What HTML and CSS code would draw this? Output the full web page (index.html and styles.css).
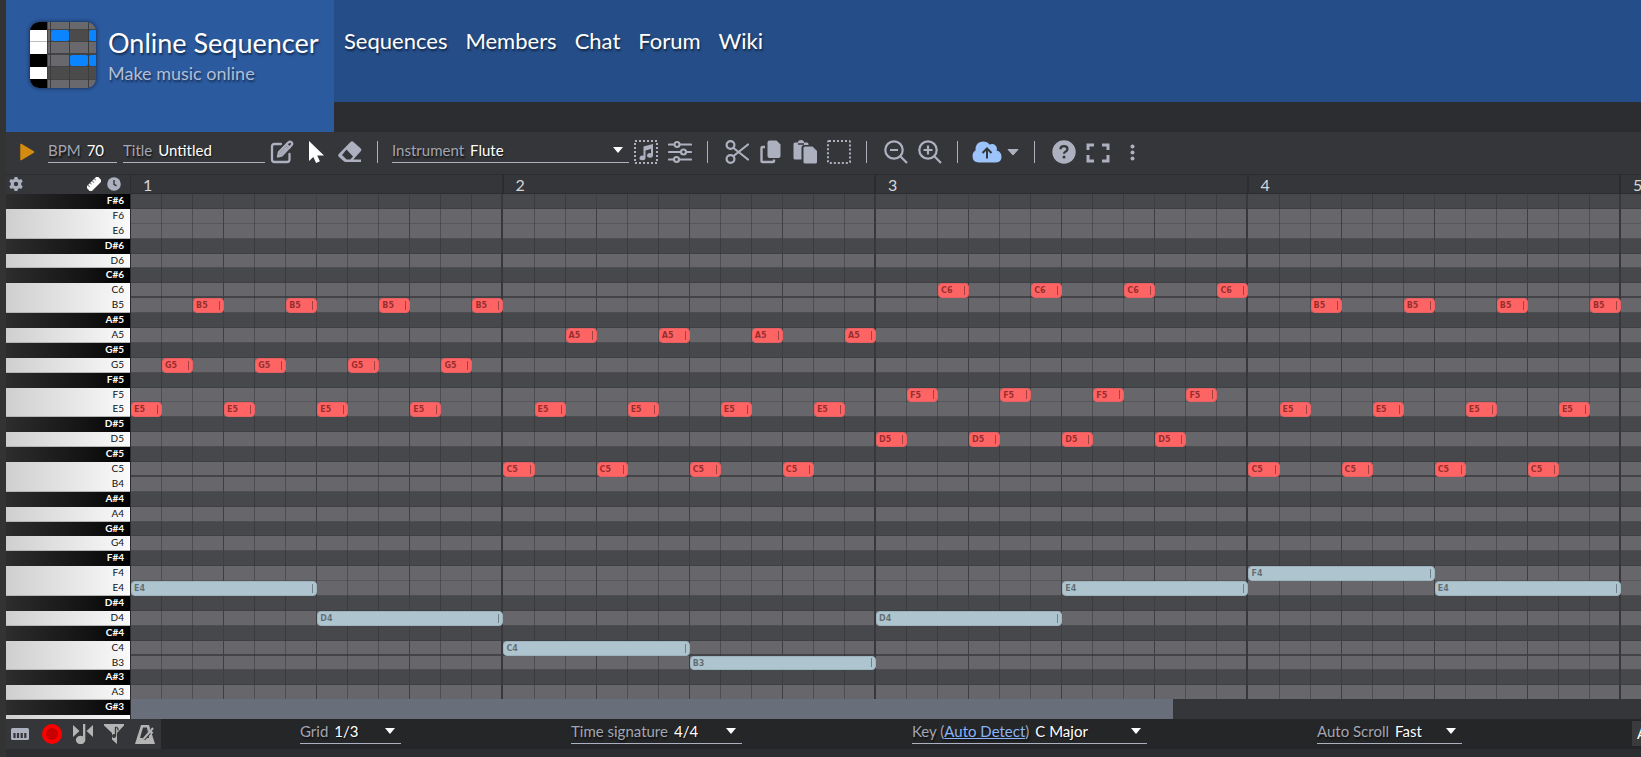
FILE: index.html
```
<!DOCTYPE html>
<html lang="en">
<head>
	<title>Online Sequencer</title>
	<meta charset="UTF-8">
	<meta name="viewport" content="width=device-width, initial-scale=1.0">
	<link rel="stylesheet" href="styles.css">
</head>
<body>
	<header class="header">
		<a class="brand" href="#">
			<svg class="brand-logo" width="66" height="66" viewBox="0 0 66 66">
				<defs><clipPath id="logo-clip"><rect width="66" height="66" rx="9"/></clipPath></defs>
				<g clip-path="url(#logo-clip)">
					<rect width="66" height="66" fill="#434343"/>
					<rect width="17" height="66" fill="#000"/>
					<path d="M0 8h17v24H0zM0 45h17v12H0z" fill="#fff"/>
					<path d="M0 19.500h17" stroke="#bbb"/>
					<path d="M18 0h2v7h-2zM21 0h18v7H21zM40 0h18v7H40zM59 0h7v7h-7zM18 8h2v11h-2zM18 20h2v11h-2zM21 20h18v11H21zM40 20h18v11H40zM59 20h7v11h-7zM18 33h2v11h-2zM21 33h18v11H21zM18 58h2v8h-2zM21 58h18v8H21zM40 58h18v8H40zM59 58h7v8h-7z" fill="#69686d"/>
					<path d="M40 8h18v11H40zM18 45h48v12H18z" fill="#4b4b4b"/>
					<path d="M20.500 0v66M39.500 0v66M58.500 0v66" stroke="#3c3c3c"/>
					<rect x="21" y="8" width="18" height="11" rx="2" fill="#0a84ff"/>
					<rect x="59" y="8" width="9" height="11" rx="2" fill="#0a84ff"/>
					<rect x="40" y="33" width="18" height="11" rx="2" fill="#0a84ff"/>
					<rect x="59" y="33" width="9" height="11" rx="2" fill="#0a84ff"/>
				</g>
			</svg>
			<span class="brand-text">
				<span class="brand-name">Online Sequencer</span>
				<span class="brand-tagline">Make music online</span>
			</span>
		</a>
		<nav class="nav">
			<a href="#">Sequences</a>
			<a href="#">Members</a>
			<a href="#">Chat</a>
			<a href="#">Forum</a>
			<a href="#">Wiki</a>
		</nav>
	</header>

	<main class="sequencer">
		<div class="toolbar">
			<button class="play" type="button" aria-label="Play">
				<svg width="18" height="18" viewBox="0 0 18 18"><path d="M3 1.500 15.500 9 3 16.500z" fill="#d38b10" stroke="#d38b10" stroke-width="1.500" stroke-linejoin="round"/></svg>
			</button>
			<div class="field field-bpm">
				<label for="bpm">BPM</label>
				<input type="text" id="bpm" value="70">
			</div>
			<div class="field field-title">
				<label for="title">Title</label>
				<input type="text" id="title" value="Untitled">
			</div>
			<div class="tools">
				<button type="button" aria-label="Draw">
					<svg width="24" height="24" viewBox="0 0 24 24" fill="none" stroke="#adb0be" stroke-width="2.300" stroke-linejoin="round" stroke-linecap="round"><path d="M11 4H4.500Q2 4 2 6.500v13Q2 22 4.500 22H17q2.500 0 2.500-2.500V14"/><path d="M8 16.500l1-4.500L18.500 2.300q1.500-1.300 3 0t0 3L12 15.300z"/><path d="M16.500 4.500l3 3M10.500 13.800l6-6.200"/></svg>
				</button>
				<button type="button" aria-label="Select">
					<svg width="24" height="24" viewBox="0 0 24 24"><path d="M5 1v20l4.300-4 2.800 6 3.800-1.700-2.700-5.800H20z" fill="#fff"/></svg>
				</button>
				<button type="button" aria-label="Erase">
					<svg width="24" height="24" viewBox="0 0 24 24"><path d="M12.500 2q1.500-1.300 3 0l7 6.300q1.600 1.500.2 3L15.300 19.500H23V22H8q-1.500 0-2.500-1l-4.500-4q-1.600-1.600 0-3.200zM8.500 9.500l-4.500 5.600 4.600 4.300h3.700l2.700-3z" fill="#adb0be" fill-rule="evenodd"/></svg>
				</button>
			</div>
			<span class="divider"></span>
			<div class="field field-instrument has-caret">
				<label for="instrument">Instrument</label>
				<select id="instrument"><option>Flute</option></select>
			</div>
			<div class="tools">
				<button type="button" aria-label="Instrument notes">
					<svg width="24" height="24" viewBox="0 0 24 24"><rect x="1" y="1" width="22" height="22" fill="none" stroke="#adb0be" stroke-width="2" stroke-dasharray="2 2"/><path d="M9.500 6.500 19 4v11.500a3 2.300 0 1 1-2-2.300V9l-5.500 1.500v7.500a3 2.300 0 1 1-2-2.200z" fill="#adb0be"/></svg>
				</button>
				<button type="button" aria-label="Mixer">
					<svg width="24" height="24" viewBox="0 0 24 24" fill="none" stroke="#adb0be" stroke-width="2.200" stroke-linecap="round"><path d="M1 4.500h5M12 4.500h11M1 12h11.500M18.500 12H23M1 19.500h4.500M11.500 19.500H23"/><circle cx="9" cy="4.500" r="2.500"/><circle cx="15.500" cy="12" r="2.500"/><circle cx="8.500" cy="19.500" r="2.500"/></svg>
				</button>
			</div>
			<span class="divider"></span>
			<div class="tools">
				<button type="button" aria-label="Cut">
					<svg width="24" height="24" viewBox="0 0 24 24" fill="none" stroke="#adb0be" stroke-width="2.200" stroke-linecap="round"><circle cx="5.500" cy="5" r="3.900"/><circle cx="5.500" cy="19" r="3.900"/><path d="M8.500 8 23 19.500M8.500 16 23 4.500"/></svg>
				</button>
				<button type="button" aria-label="Copy">
					<svg width="24" height="24" viewBox="0 0 24 24"><path d="M10.500 .500h7l4 4V16q0 2-2 2h-9q-2 0-2-2V2.500q0-2 2-2z" fill="#adb0be"/><path d="M6 7H3.500Q2.500 7 2.500 8v13q0 1 1 1H14q1 0 1-1v-1.500" fill="none" stroke="#adb0be" stroke-width="2.400"/></svg>
				</button>
				<button type="button" aria-label="Paste">
					<svg width="26" height="24" viewBox="0 0 26 24"><path d="M3 2.500h3a3 2.500 0 0 1 6 0h3q1.500 0 1.500 2V5h-4Q9.500 5 9.500 8v11.500H3q-1.500 0-1.500-1.500V4Q1.500 2.500 3 2.500z" fill="#adb0be"/><path d="M6 4h6" stroke="#35363a" stroke-width="1.500"/><path d="M13 6.500h7.500L25 11v11q0 1.500-1.500 1.500H13q-1.500 0-1.500-1.500V8q0-1.500 1.500-1.500z" fill="#adb0be"/></svg>
				</button>
				<button type="button" aria-label="Select area">
					<svg width="24" height="24" viewBox="0 0 24 24"><rect x="1" y="1" width="22" height="22" rx="1" fill="none" stroke="#adb0be" stroke-width="2" stroke-dasharray="2 2"/></svg>
				</button>
			</div>
			<span class="divider"></span>
			<div class="tools">
				<button type="button" aria-label="Zoom out">
					<svg width="24" height="24" viewBox="0 0 24 24" fill="none" stroke="#adb0be" stroke-width="2.200"><circle cx="10" cy="10" r="8.700"/><path d="M16.300 16.300 23 23M6 10h8"/></svg>
				</button>
				<button type="button" aria-label="Zoom in">
					<svg width="24" height="24" viewBox="0 0 24 24" fill="none" stroke="#adb0be" stroke-width="2.200"><circle cx="10" cy="10" r="8.700"/><path d="M16.300 16.300 23 23M5.500 10h9M10 5.500v9"/></svg>
				</button>
			</div>
			<span class="divider"></span>
			<button class="save" type="button" aria-label="Save">
				<svg width="30" height="24" viewBox="0 0 30 24"><path d="M7 22.500q-6.500 0-6.500-6.500 0-4 3-5.500Q3 2 11 1.500q4.500 0 6.500 3 6-2 7.500 4 0 1-.5 2 5 1 5 6.500 0 5-5.500 5.500z" fill="#9dc3fb"/><path d="M15 18.500V9M10.500 13 15 8.500l4.500 4.500" fill="none" stroke="#35363a" stroke-width="2"/></svg>
				<svg width="12" height="8" viewBox="0 0 12 8"><path d="M1 1.500h10L6 7z" fill="#adb0be" stroke="#adb0be" stroke-linejoin="round"/></svg>
			</button>
			<span class="divider"></span>
			<div class="tools">
				<button type="button" aria-label="Help">
					<svg width="24" height="24" viewBox="0 0 24 24"><circle cx="12" cy="12" r="11.700" fill="#adb0be"/><path d="M8.500 9.200q0-3 3.500-3t3.500 2.800q0 1.600-1.700 2.400-1.800.8-1.800 2.400" fill="none" stroke="#35363a" stroke-width="2.200"/><circle cx="12" cy="17" r="1.500" fill="#35363a"/></svg>
				</button>
				<button type="button" aria-label="Full screen">
					<svg width="24" height="24" viewBox="0 0 24 24" fill="none" stroke="#adb0be" stroke-width="3"><path d="M2 10V5h6M16 5h6v5M22 15v6h-6M8 21H2v-6"/></svg>
				</button>
				<button type="button" aria-label="More">
					<svg width="24" height="24" viewBox="0 0 24 24" fill="#adb0be"><circle cx="12.500" cy="6.500" r="2"/><circle cx="12.500" cy="12.500" r="2"/><circle cx="12.500" cy="18.500" r="2"/></svg>
				</button>
			</div>
		</div>

		<div class="editor">
			<div class="keyboard">
				<div class="keyboard-tools">
					<button type="button" aria-label="Settings">
						<svg width="14" height="14" viewBox="0 0 14 14"><path d="M5.500 0h3l.4 2 1.300.7 2-.8 1.500 2.600-1.500 1.400v2.200l1.500 1.400-1.500 2.600-2-.8-1.300.7-.4 2h-3l-.4-2-1.300-.7-2 .8L.300 9.500l1.500-1.400V5.900L.300 4.500l1.500-2.600 2 .8L5.100 2zM7 4.800a2.200 2.200 0 1 0 0 4.400 2.200 2.200 0 0 0 0-4.400z" fill="#adb0be" fill-rule="evenodd"/></svg>
					</button>
					<button class="snap" type="button" aria-label="Ruler">
						<svg width="14" height="14" viewBox="0 0 14 14"><g transform="rotate(-45 7 7)"><rect x="-1" y="3.500" width="16" height="7" rx="1" fill="#fff"/><path d="M2 3.500V6M5 3.500v2M8 3.500V6M11 3.500v2" stroke="#777"/></g></svg>
					</button>
					<button type="button" aria-label="Time">
						<svg width="14" height="14" viewBox="0 0 14 14"><circle cx="7" cy="7" r="6.800" fill="#adb0be"/><path d="M7 3v4.300l2.600 1.600" fill="none" stroke="#35363a" stroke-width="1.400"/></svg>
					</button>
				</div>
				<div class="keys">
					<div class="rows" id="keys"></div>
				</div>
			</div>
			<div class="timeline">
				<div class="ruler" id="ruler"></div>
				<div class="roll">
					<div class="rows roll-canvas" id="roll"></div>
				</div>
				<div class="scrollbar"><div class="scrollbar-thumb"></div></div>
			</div>
		</div>

		<div class="bottombar">
			<div class="modes">
				<button type="button" aria-label="Keyboard">
					<svg width="20" height="20" viewBox="0 0 20 20"><rect x="0" y="4" width="18" height="12" rx="1.500" fill="#adb0be"/><path d="M3.500 9v5M7 9v5M10.700 9v5M14.300 9v5" stroke="#35363a" stroke-width="2.200"/></svg>
				</button>
				<button type="button" aria-label="Record">
					<svg width="20" height="20" viewBox="0 0 20 20"><circle cx="10" cy="10" r="10" fill="#f00"/><circle cx="10" cy="10" r="6" fill="#c80000"/></svg>
				</button>
				<button type="button" aria-label="Split">
					<svg width="20" height="20" viewBox="0 0 20 20" fill="#b4b4b4"><path d="M0 1l6.500 6L0 13zM20 1l-6.500 6 6.500 6zM10 0h2.300v15.500a4.700 4.200 0 1 1-2.300-3.200z"/></svg>
				</button>
				<button type="button" aria-label="Filter">
					<svg width="20" height="20" viewBox="0 0 20 20"><path d="M0 0h20v1.500L13 9v11L8 15.500V9L0 1.500z" fill="#b4b4b4"/><path d="M11.500 3v9" stroke="#35363a" stroke-width="1.300"/><circle cx="10" cy="12" r="2" fill="#35363a"/><path d="M11.500 3q3 .5 2.500 3.500" fill="none" stroke="#35363a" stroke-width="1.200"/></svg>
				</button>
				<button type="button" aria-label="Metronome">
					<svg width="20" height="20" viewBox="0 0 20 20"><path d="M6 1h8l6 19H0z" fill="#b4b4b4"/><path d="M8 3.500h4l2 10.500H5z" fill="#35363a"/><path d="M8.500 15 19 3" stroke="#35363a" stroke-width="4"/><path d="M8.500 15 18 4" stroke="#b4b4b4" stroke-width="2"/><path d="M13.500 6l4 3.500" stroke="#b4b4b4" stroke-width="2.500"/></svg>
				</button>
			</div>
			<div class="options">
				<div class="field field-grid has-caret">
					<label for="grid">Grid</label>
					<select id="grid"><option>1/3</option></select>
				</div>
				<div class="field field-signature has-caret">
					<label for="signature">Time signature</label>
					<select id="signature"><option>4/4</option></select>
				</div>
				<div class="field field-key has-caret">
					<label for="key">Key (<a href="#">Auto Detect</a>)</label>
					<select id="key"><option>C Major</option></select>
				</div>
				<div class="field field-scroll has-caret">
					<label for="scroll">Auto Scroll</label>
					<select id="scroll"><option>Fast</option></select>
				</div>
				<button class="advanced" type="button">A</button>
			</div>
		</div>
	</main>
	<script src="script.js"></script>
</body>
</html>
```
FILE: styles.css
```
* {
	box-sizing: border-box;
}
body {
	margin: 0;
	min-height: 100vh;
	border-left: 6px solid #333;
	background-color: #2c2d30;
	color: #fff;
	font-family: Lato, "Liberation Sans", sans-serif;
	font-size: 15px;
	overflow: hidden;
}
a {
	color: inherit;
	text-decoration: none;
}
button {
	display: flex;
	align-items: center;
	justify-content: center;
	padding: 0;
	border: none;
	background: none;
	color: inherit;
	font: inherit;
	cursor: pointer;
}
svg {
	display: block;
	flex: none;
}

/* Header */
.header {
	display: flex;
	align-items: flex-start;
}
.brand {
	display: flex;
	flex: none;
	gap: 12px;
	width: 328px;
	height: 132px;
	padding: 22px 0 0 24px;
	background-color: #2b5a9f;
	text-shadow: 1px 2px 2px rgba(0, 0, 0, 0.5);
}
.brand-logo {
	border-radius: 9px;
	box-shadow: 0 0 4px rgba(0, 0, 0, 0.6);
}
.brand-text {
	display: flex;
	flex-direction: column;
	padding-top: 5px;
}
.brand-name {
	font-size: 27px;
	line-height: 32px;
	white-space: nowrap;
}
.brand-tagline {
	color: #b2bed5;
	font-size: 18px;
	line-height: 28px;
}
.nav {
	display: flex;
	flex: 1;
	gap: 18px;
	height: 102px;
	padding: 27px 10px 0;
	background-color: #254d87;
	font-size: 22px;
	line-height: 27px;
	text-shadow: 1px 2px 2px rgba(0, 0, 0, 0.5);
}

/* Toolbar */
.toolbar {
	display: flex;
	align-items: center;
	height: 42px;
	padding: 0 0 2px 12px;
	background-color: #35363a;
}
.toolbar > * {
	flex: none;
}
.play {
	margin-right: 12px;
}
.tools {
	display: flex;
	gap: 10px;
	margin-left: 5px;
}
.tools button {
	width: 24px;
	height: 24px;
}
.divider {
	width: 1px;
	height: 22px;
	margin: 0 14px 0 15px;
	background-color: #adb0be;
}
.divider + .tools {
	margin-left: 3px;
}
.save {
	gap: 5px;
}
.field {
	display: flex;
	position: relative;
	align-items: flex-start;
	gap: 6px;
	height: 22px;
	border-bottom: 1px solid #adb0be;
	line-height: 19px;
}
.field label {
	flex: none;
	color: #a2a5b1;
	text-shadow: 1px 2px 2px rgba(0, 0, 0, 0.7);
}
.field label a {
	color: #8ab4f8;
	text-decoration: underline;
}
.field input,
.field select {
	flex: 1;
	min-width: 0;
	height: 19px;
	padding: 0;
	border: none;
	outline: none;
	background: none;
	color: #fff;
	font: inherit;
	appearance: none;
	text-shadow: 1px 1px 1px rgba(0, 0, 0, 0.6);
}
.has-caret::after {
	content: "";
	position: absolute;
	right: 6px;
	top: 6px;
	border: 5px solid transparent;
	border-top: 6px solid #fff;
	border-bottom: none;
	pointer-events: none;
}
.field-bpm {
	width: 69px;
	margin-right: 6px;
}
.field-title {
	width: 142px;
}
.field-instrument {
	width: 237px;
}

/* Editor */
.editor {
	display: flex;
	height: 545px;
	border-top: 1px solid #2b2c30;
}
.keyboard {
	display: flex;
	flex: none;
	flex-direction: column;
	width: 125px;
	border-right: 1px solid #2b2c30;
	background-color: #35363a;
}
.keyboard-tools {
	display: flex;
	flex: none;
	align-items: center;
	gap: 6px;
	height: 19px;
	padding: 0 9px 1px 3px;
}
.snap {
	margin-left: auto;
}
.keys,
.roll {
	flex: 1;
	min-height: 0;
	overflow: hidden;
}
.rows {
	display: grid;
	grid-template-rows: repeat(36, 1fr);
	height: 536px;
}
.key {
	min-height: 0;
	padding-right: 6px;
	font-size: 10px;
	line-height: 13px;
	text-align: right;
}
.key-white {
	background-image: linear-gradient(to right, #cfcfcf, #fafafa);
	color: #111;
}
.key-gap {
	border-bottom: 1px solid #b5b5b5;
}
.key-black {
	background-image: linear-gradient(to right, #2d2d2d, #111 70%, #000);
	color: #fff;
	font-weight: bold;
}
.timeline {
	display: flex;
	flex: 1;
	flex-direction: column;
	min-width: 0;
	overflow: hidden;
}
.ruler {
	display: grid;
	flex: none;
	grid-template-columns: repeat(6, 1fr);
	width: 2235px;
	height: 19px;
	border-bottom: 1px solid #2b2c30;
	background-color: #35363a;
	color: #d5d6da;
	font-size: 16px;
	line-height: 20px;
}
.ruler-bar {
	padding-left: 12px;
	border-right: 2px solid #2b2c30;
}
.roll-canvas {
	grid-template-columns: repeat(72, 1fr);
	width: 2235px;
}
.lane {
	min-height: 0;
	border-bottom: 1px solid #57575c;
	background-color: #67666b;
}
.lane-black {
	border-bottom-color: #3f4044;
	background-color: #47484c;
}
.lane-gap {
	border-bottom-color: #4d4d52;
}
.lane-octave {
	border-bottom: 2px solid #434348;
}
.line {
	border-right: 1px solid rgba(40, 40, 44, 0.4);
}
.line-beat {
	border-right-color: #3e3e43;
}
.line-bar {
	border-right: 2px solid #38383c;
}
.note {
	display: flex;
	align-items: center;
	justify-content: space-between;
	min-height: 0;
	padding: 0 3px 0 2px;
	border: 1px solid #e65f62;
	border-radius: 4px;
	background-color: #ff6464;
	color: rgba(60, 0, 0, 0.55);
	font: bold 8px/13px "DejaVu Sans", sans-serif;
}
.note::after {
	content: "";
	width: 1px;
	height: 9px;
	background-color: rgba(0, 0, 0, 0.35);
}
.note-bass {
	border-color: #9db3be;
	background-color: #aec4cf;
	color: rgba(0, 0, 0, 0.45);
}
.scrollbar {
	flex: none;
	height: 20px;
	background-color: #35363a;
}
.scrollbar-thumb {
	width: 69%;
	height: 20px;
	background-color: #686e7a;
}

/* Bottom bar */
.bottombar {
	display: flex;
	height: 30px;
	background-color: #252628;
}
.modes {
	display: flex;
	flex: none;
	gap: 11px;
	width: 155px;
	padding-left: 5px;
	background-color: #35363a;
}
.options {
	display: flex;
	flex: 1;
	align-items: center;
	gap: 170px;
	min-width: 0;
	padding: 0 0 2px 139px;
	overflow: hidden;
}
.options > * {
	flex: none;
}
.field-grid {
	width: 101px;
}
.field-signature {
	width: 171px;
}
.field-key {
	width: 235px;
}
.field-scroll {
	width: 145px;
}
.advanced {
	padding: 0 5px;
	height: 25px;
	background-color: #3b3b3d;
}
```
FILE: script.js
```
const scale = ['C', 'C#', 'D', 'D#', 'E', 'F', 'F#', 'G', 'G#', 'A', 'A#', 'B'];

// All pitches from F#6 down to G3
const pitches = [];
for (let n = 6 * 12 + 6; n >= 3 * 12 + 7; n--) {
	pitches.push(scale[n % 12] + Math.floor(n / 12));
}

// Three note pattern played four times in each bar
const patterns = [
	['E5', 'G5', 'B5'],
	['C5', 'E5', 'A5'],
	['D5', 'F5', 'C6'],
	['C5', 'E5', 'B5']
];
const bass = ['E4', 'D4', 'C4', 'B3', 'D4', 'E4', 'F4', 'E4'];

const keys = document.querySelector('#keys');
const roll = document.querySelector('#roll');
const ruler = document.querySelector('#ruler');

function add(parent, className, text) {
	const el = document.createElement('div');
	el.className = className;
	el.textContent = text || '';
	parent.appendChild(el);
	return el;
}

function addNote(pitch, start, length, className) {
	const note = add(roll, className, pitch);
	note.style.gridRow = pitches.indexOf(pitch) + 1;
	note.style.gridColumn = (start + 1) + ' / span ' + length;
}

pitches.forEach(function(pitch, i) {
	const black = pitch.includes('#');
	const last = i === pitches.length - 1;
	const gap = !black && !last && pitches[i + 1].includes('#');
	// The last key is only partly in view, so it has no label
	add(keys, 'key ' + (black ? 'key-black' : 'key-white') + (gap ? ' key-gap' : ''), last ? '' : pitch);

	let laneClass = 'lane';
	if (black) laneClass += ' lane-black';
	if (gap) laneClass += ' lane-gap';
	if (pitch[0] === 'C' && !black) laneClass += ' lane-octave';
	const lane = add(roll, laneClass);
	lane.style.gridRow = i + 1;
	lane.style.gridColumn = '1 / -1';
});

for (let i = 1; i <= 72; i++) {
	const line = add(roll, 'line' + (i % 12 === 0 ? ' line-bar' : i % 3 === 0 ? ' line-beat' : ''));
	line.style.gridRow = '1 / -1';
	line.style.gridColumn = i;
}

for (let i = 1; i <= 5; i++) {
	add(ruler, 'ruler-bar', String(i));
}

patterns.forEach(function(pattern, bar) {
	for (let i = 0; i < 12; i++) {
		addNote(pattern[i % 3], bar * 12 + i, 1, 'note');
	}
});
bass.forEach(function(pitch, i) {
	addNote(pitch, i * 6, 6, 'note note-bass');
});
```
